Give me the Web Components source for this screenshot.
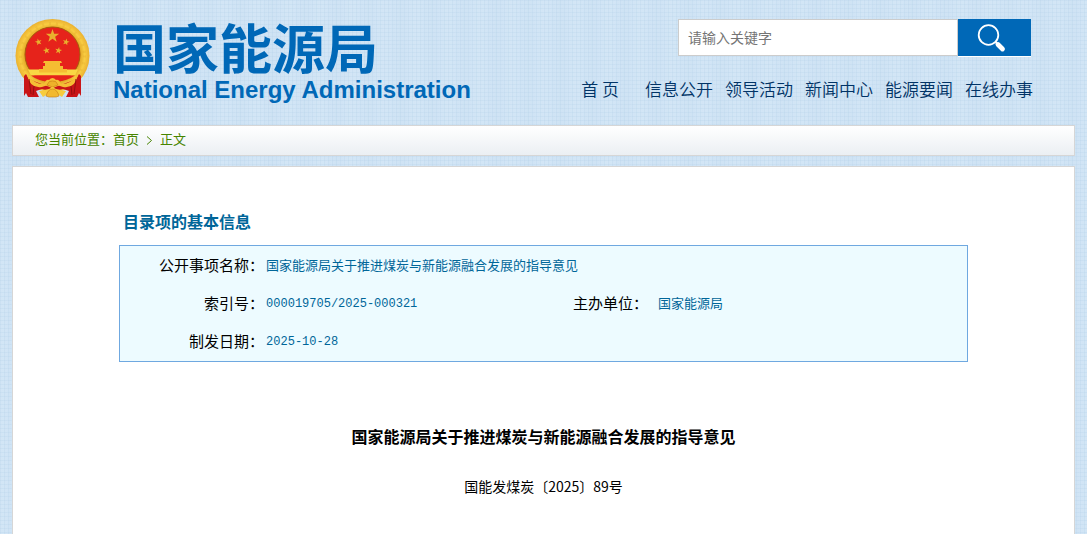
<!DOCTYPE html>
<html lang="zh-CN">
<head>
<meta charset="utf-8">
<meta name="viewport" content="width=device-width, initial-scale=1">
<title>国家能源局关于推进煤炭与新能源融合发展的指导意见</title>
<style>
  html {
    background-color: #d3e6f6;
    background-image:
      linear-gradient(90deg, rgba(180, 208, 232, 0.25) 1px, transparent 1px),
      linear-gradient(rgba(180, 208, 232, 0.25) 1px, transparent 1px),
      linear-gradient(90deg, transparent, rgba(180, 208, 232, 0.15), transparent);
    background-size: 4px 4px, 4px 4px, 32px 32px;
  }

  body {
    display: flex;
    flex-direction: column;
    min-height: 100vh;
    margin: 0;
    font-family: "Liberation Sans", "Noto Sans CJK SC", sans-serif;
    font-size: 13px;
    color: #000;
  }

  content-panel {
    flex: 1;
  }

  a {
    color: inherit;
    text-decoration: none;
  }
</style>
</head>
<body>
<site-header>
  <site-logo slot="logo"></site-logo>
  <search-box slot="search"></search-box>
  <site-nav slot="nav">
    <a class="home" href="#">首 页</a>
    <a href="#">信息公开</a>
    <a href="#">领导活动</a>
    <a href="#">新闻中心</a>
    <a href="#">能源要闻</a>
    <a href="#">在线办事</a>
  </site-nav>
</site-header>
<bread-crumb>
  <a href="#">首页</a>
  <span slot="current">正文</span>
</bread-crumb>
<content-panel>
  <catalog-info></catalog-info>
  <article-heading>
    国家能源局关于推进煤炭与新能源融合发展的指导意见
    <span slot="number">国能发煤炭〔2025〕89号</span>
  </article-heading>
</content-panel>

<script>
class SiteHeader extends HTMLElement {
  connectedCallback() {
    this.attachShadow({ mode: 'open' });
    this.shadowRoot.innerHTML = `
      <style>
        :host {
          display: block;
        }

        header {
          display: flex;
          justify-content: space-between;
          align-items: flex-start;
          min-height: 125px;
          padding: 0 54px 0 14px;
          box-sizing: border-box;
        }

        .tools {
          display: flex;
          flex-direction: column;
          align-items: flex-end;
          gap: 21px;
          padding-top: 19px;
        }
      </style>

      <header>
        <slot name="logo"></slot>
        <div class="tools">
          <slot name="search"></slot>
          <slot name="nav"></slot>
        </div>
      </header>
    `;
  }
}

class SiteLogo extends HTMLElement {
  connectedCallback() {
    this.attachShadow({ mode: 'open' });
    this.shadowRoot.innerHTML = `
      <style>
        :host {
          display: block;
        }

        .logo {
          display: flex;
          gap: 21px;
          padding-top: 16px;
          color: #0068b7;
          text-decoration: none;
          font-weight: bold;
          white-space: nowrap;
        }

        .names {
          display: flex;
          flex-direction: column;
        }

        .zh {
          font-family: "Noto Sans CJK SC", sans-serif;
          font-size: 53px;
          line-height: 60px;
        }

        .en {
          font-size: 24px;
          line-height: 28px;
        }
      </style>

      <a class="logo" href="#">
        <svg width="78" height="84" viewBox="0 0 78 84" aria-hidden="true">
          <defs>
            <radialGradient id="gold" cx="0.5" cy="0.5" r="0.5">
              <stop offset="0.72" stop-color="#dc9f20"/>
              <stop offset="0.87" stop-color="#f9cd42"/>
              <stop offset="1" stop-color="#eab030"/>
            </radialGradient>
            <path id="star" d="M0-10 2.3-3.2 9.5-3.1 3.8 1.2 5.9 8.1 0 4-5.9 8.1-3.8 1.2-9.5-3.1-2.3-3.2Z"/>
          </defs>
          <ellipse cx="38.5" cy="39.5" rx="37" ry="36.5" fill="url(#gold)"/>
          <circle cx="38.5" cy="39.5" r="32" fill="none" stroke="#d9971d" stroke-width="3" stroke-dasharray="2 5" opacity="0.2"/>
          <circle cx="38.5" cy="38.5" r="27.5" fill="#e6231b" stroke="#a65b0d"/>
          <g fill="#e9b02e">
            <use href="#star" transform="translate(38.5 20) scale(0.7)"/>
            <use href="#star" transform="translate(24.5 26) rotate(-15) scale(0.36)"/>
            <use href="#star" transform="translate(52 26) rotate(15) scale(0.36)"/>
            <use href="#star" transform="translate(32.5 34.5) rotate(-10) scale(0.36)"/>
            <use href="#star" transform="translate(44.5 34.5) rotate(10) scale(0.36)"/>
          </g>
          <path d="M30 45h17l1 2h-2v3h3v3h4v4H25v-4h4v-3h2v-3h-2Z" fill="#f5bd32"/>
          <path d="M14 53.5h11v3h28v-3h11l-3 6H17Z" fill="#f9d744"/>
          <path d="M17 59.5h44Q52 66 38.5 66 25 66 17 59.5Z" fill="#e6231b"/>
          <path d="M12 58Q14 64 25 67L38.5 72 52 67Q63 64 65 58L67 60V80L65 77 63 81H52L55 75 49 73 38.5 76 28 73 22 75 25 81H14L12 77 10 80V60Z" fill="#c91518"/>
          <path d="M13 59Q22 69 30 68 32 63 35 64 38.5 60 42 64 45 63 47 68 55 69 64 59 61 73 49 71L43 69 38.5 73 34 69 28 71Q16 73 13 59Z" fill="#f5be35"/>
          <path d="M33 69Q35 64 38.5 65 42 64 44 69L38.5 71Z" fill="#eeb12a" stroke="#c87912" stroke-width="0.6"/>
          <path d="M25 75 35 73 38.5 71 42 73 52 75 48 81 42 77 38.5 79 35 77 29 81Z" fill="#f7cc3d"/>
          <path d="M32 80Q34 73 38.5 73 43 73 45 80L42 81H35Z" fill="#f2b930" stroke="#c87912" stroke-width="0.6"/>
          <path d="M15 63 17 78M20 70 19 79M62 63 60 78M57 70 58 79" stroke="#94100f" fill="none"/>
        </svg>
        <span class="names">
          <span class="zh">国家能源局</span>
          <span class="en">National Energy Administration</span>
        </span>
      </a>
    `;
  }
}

class SearchBox extends HTMLElement {
  connectedCallback() {
    this.attachShadow({ mode: 'open' });
    this.shadowRoot.innerHTML = `
      <style>
        :host {
          display: block;
          padding-right: 2px;
        }

        form {
          display: flex;
          margin: 0;
        }

        input {
          box-sizing: border-box;
          width: 280px;
          height: 37px;
          padding: 0 9px;
          border: 1px solid #ccc;
          background: #fff;
          font: 14px "Liberation Sans", "Noto Sans CJK SC", sans-serif;
        }

        input::placeholder {
          color: #757575;
        }

        button {
          display: flex;
          align-items: center;
          justify-content: center;
          width: 73px;
          height: 37px;
          padding: 0 6px 0 0;
          border: none;
          background: #0068b7;
          box-shadow: 0 1px #fff;
          cursor: pointer;
        }
      </style>

      <form role="search">
        <input type="text" placeholder="请输入关键字" aria-label="请输入关键字">
        <button type="submit" aria-label="搜索">
          <svg width="30" height="30" viewBox="0 0 30 30" fill="none" stroke="#fff" aria-hidden="true">
            <circle cx="11.5" cy="12" r="9.8" stroke-width="1.8"/>
            <path d="M18.5 19 20.5 21" stroke-width="2"/>
            <path d="M21 21.5 25.5 26" stroke-width="4.8" stroke-linecap="round"/>
          </svg>
        </button>
      </form>
    `;
  }
}

class SiteNav extends HTMLElement {
  connectedCallback() {
    this.attachShadow({ mode: 'open' });
    this.shadowRoot.innerHTML = `
      <style>
        :host {
          display: block;
        }

        nav {
          display: flex;
          gap: 12px;
          color: #003366;
          font-family: "Noto Sans CJK SC", sans-serif;
          font-size: 17px;
          font-weight: 350;
          line-height: 24px;
          white-space: nowrap;
        }

        ::slotted(.home) {
          margin-right: 14px;
        }
      </style>

      <nav><slot></slot></nav>
    `;
  }
}

class BreadCrumb extends HTMLElement {
  connectedCallback() {
    this.attachShadow({ mode: 'open' });
    this.shadowRoot.innerHTML = `
      <style>
        :host {
          display: block;
          margin: 0 12px 10px;
        }

        nav {
          display: flex;
          align-items: center;
          padding: 3px 22px 4px;
          border: 1px solid #d6d6d6;
          background: linear-gradient(#fff, #ebeff3);
          color: #478400;
          line-height: 22px;
        }

        svg {
          margin: 0 7px;
        }
      </style>

      <nav>
        <span>您当前位置：</span>
        <slot></slot>
        <svg width="7" height="9" viewBox="0 0 7 9" fill="none" stroke="currentColor" aria-hidden="true">
          <path d="M1 0.5 5.5 4.5 1 8.5"/>
        </svg>
        <slot name="current"></slot>
      </nav>
    `;
  }
}

class ContentPanel extends HTMLElement {
  connectedCallback() {
    this.attachShadow({ mode: 'open' });
    this.shadowRoot.innerHTML = `
      <style>
        :host {
          display: block;
          margin: 0 12px;
          padding: 44px 0 32px;
          border: 1px solid #d6d6d6;
          border-bottom: none;
          background: #fff;
        }
      </style>

      <main><slot></slot></main>
    `;
  }
}

class CatalogInfo extends HTMLElement {
  connectedCallback() {
    this.attachShadow({ mode: 'open' });
    this.shadowRoot.innerHTML = `
      <style>
        :host {
          display: block;
          width: 80%;
          margin: 0 auto;
        }

        h2 {
          margin: 0 0 10px;
          padding-left: 4px;
          color: #069;
          font-size: 16px;
          line-height: 24px;
        }

        table {
          width: 100%;
          padding-bottom: 1px;
          border: 1px solid #6fa8e0;
          border-spacing: 0;
          background: #edfbff;
          table-layout: fixed;
        }

        th, td {
          height: 36px;
          padding: 0 0 2px;
          text-align: left;
        }

        th {
          font-size: 15px;
          font-weight: normal;
          text-align: right;
          white-space: nowrap;
        }

        td {
          padding-left: 2px;
          color: #069;
          font-size: 13px;
        }

        td.unit {
          padding-left: 10px;
        }

        td.num {
          padding: 2px 0 0 2px;
          font-family: "Liberation Mono", monospace;
          font-size: 12px;
        }
      </style>

      <h2>目录项的基本信息</h2>
      <table>
        <colgroup>
          <col style="width: 144px">
          <col style="width: 308px">
          <col style="width: 76px">
          <col>
        </colgroup>
        <tr>
          <th scope="row">公开事项名称：</th>
          <td colspan="3">国家能源局关于推进煤炭与新能源融合发展的指导意见</td>
        </tr>
        <tr>
          <th scope="row">索引号：</th>
          <td class="num">000019705/2025-000321</td>
          <th scope="row">主办单位：</th>
          <td class="unit">国家能源局</td>
        </tr>
        <tr>
          <th scope="row">制发日期：</th>
          <td class="num" colspan="3">2025-10-28</td>
        </tr>
      </table>
    `;
  }
}

class ArticleHeading extends HTMLElement {
  connectedCallback() {
    this.attachShadow({ mode: 'open' });
    this.shadowRoot.innerHTML = `
      <style>
        :host {
          display: block;
          padding-top: 64px;
          text-align: center;
        }

        h1 {
          margin: 0 0 24px;
          font-size: 16px;
          line-height: 24px;
        }

        p {
          margin: 0;
          font-family: "Noto Sans CJK SC", sans-serif;
          font-size: 14px;
          line-height: 24px;
        }
      </style>

      <h1><slot></slot></h1>
      <p><slot name="number"></slot></p>
    `;
  }
}

customElements.define('site-header', SiteHeader);
customElements.define('site-logo', SiteLogo);
customElements.define('search-box', SearchBox);
customElements.define('site-nav', SiteNav);
customElements.define('bread-crumb', BreadCrumb);
customElements.define('content-panel', ContentPanel);
customElements.define('catalog-info', CatalogInfo);
customElements.define('article-heading', ArticleHeading);
</script>
</body>
</html>
